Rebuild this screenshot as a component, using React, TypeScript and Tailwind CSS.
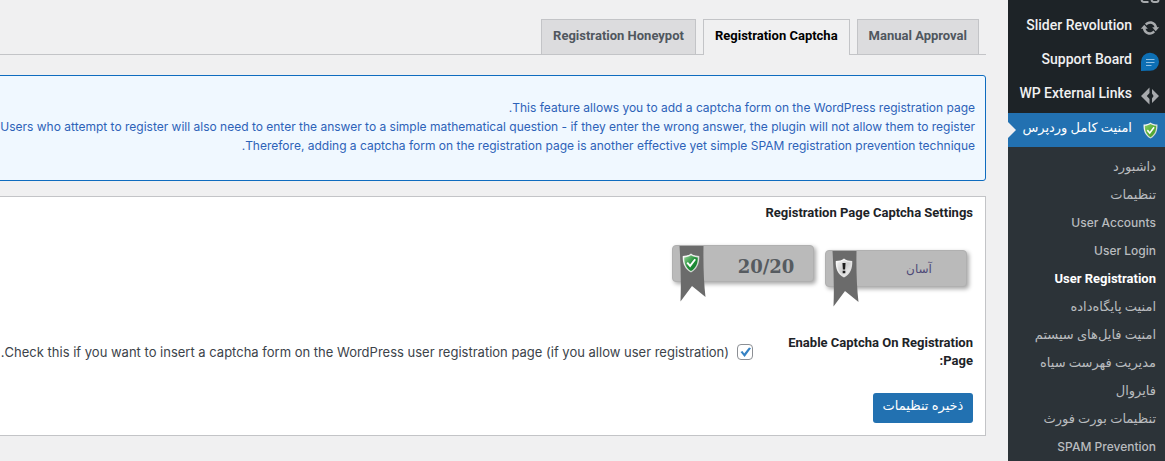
import type { ReactNode } from "react";

const latin = "font-['Roboto','DejaVu_Sans',sans-serif]";

function Shield({ kind, className }: { kind: "green" | "lime" | "gray"; className: string }) {
  const gray = kind === "gray";
  const fill = { green: ["#9bd69b", "#23913a", "#0f7a2a"], lime: ["#8fce6a", "#5bb03a", "#4a9c2c"], gray: ["#f4f4f4", "#d0d0d0", "#f8f8f8"] }[kind];
  return (
    <svg viewBox="0 0 16 18" className={className} aria-hidden="true">
      <defs>
        <linearGradient id={"rim-" + kind} x1="0" y1="0" x2="1" y2="1">
          <stop offset="0" stopColor="#ffffff" />
          <stop offset="1" stopColor={gray ? "#d5d5d5" : "#c2cbc2"} />
        </linearGradient>
        <linearGradient id={"fill-" + kind} x1="0" y1="0" x2="1" y2="1">
          <stop offset="0" stopColor={fill[0]} />
          <stop offset="0.5" stopColor={fill[1]} />
          <stop offset="1" stopColor={fill[2]} />
        </linearGradient>
      </defs>
      <path d="M8 0.4 C10 2 12.6 2.6 15.4 2.6 C15.8 9.5 13.6 14.6 8 17.6 C2.4 14.6 0.2 9.5 0.6 2.6 C3.4 2.6 6 2 8 0.4Z" fill={"url(#rim-" + kind + ")"} />
      <path d="M8 2.1 C10 3.4 12 3.9 14.1 4 C14.2 9.4 12.4 13.6 8 16.2 C3.6 13.6 1.8 9.4 1.9 4 C4 3.9 6 3.4 8 2.1Z" fill={"url(#fill-" + kind + ")"} />
      {gray ? (
        <path d="M6.6 4.4 H9.4 L9 10.4 H7Z M6.8 11.4 H9.2 V13.8 H6.8Z" fill="#1c1c1c" />
      ) : (
        <path d="M4.6 8.6 L7.2 11.6 L11.8 5.6" fill="none" stroke="#fff" strokeWidth="1.7" />
      )}
    </svg>
  );
}

function Badge({ kind, children }: { kind: "green" | "gray"; children: ReactNode }) {
  return (
    <div className="relative flex h-[37px] w-[142px] items-center justify-center rounded-[4px] border border-[#b0b0b0] bg-[#bababa] pl-[46px] shadow-[2px_2px_4px_rgba(0,0,0,0.35)]">
      <svg viewBox="0 0 27 56" className="absolute top-0 left-[6px] h-[56px] w-[27px]" aria-hidden="true">
        <path d="M0.5 0 H24.5 Q24 30 26.5 51 L13 40 L1.5 55.5 Q2.5 30 0.5 0Z" fill="#6b6b6b" />
      </svg>
      <Shield kind={kind} className="absolute top-[7px] left-[9px] h-[20px] w-[18px]" />
      {children}
    </div>
  );
}

const menu: { label: string; icon: ReactNode }[] = [
  {
    label: "Slider Revolution",
    icon: (
      <svg viewBox="0 0 20 20" className="size-5" aria-hidden="true">
        <path
          d="M10.2 3.28c3.53 0 6.43 2.61 6.92 6h2.08l-3.5 4-3.5-4h2.32c-.45-1.97-2.21-3.45-4.32-3.45-1.45 0-2.73.71-3.54 1.78L4.95 5.66C6.23 4.2 8.11 3.28 10.2 3.28zm-.4 13.44c-3.52 0-6.43-2.61-6.92-6H.8l3.5-4c1.17 1.33 2.33 2.67 3.5 4H5.48c.45 1.97 2.21 3.45 4.32 3.45 1.45 0 2.73-.71 3.54-1.78l1.71 1.95c-1.28 1.46-3.15 2.38-5.25 2.38z"
          fill="#a7aaad"
        />
      </svg>
    ),
  },
  {
    label: "Support Board",
    icon: (
      <svg viewBox="0 0 20 20" className="size-5" aria-hidden="true">
        <path d="M1 19 V10 A9 9 0 1 1 10 18.8 Q5 18.6 1 19Z" fill="#0d6fb4" />
        <path d="M6 7.5 H14.5 M6 10.5 H14.5 M6 13.5 H11.5" stroke="#8fc0e4" strokeWidth="1.2" />
      </svg>
    ),
  },
  {
    label: "WP External Links",
    icon: (
      <svg viewBox="0 0 20 20" className="size-5" aria-hidden="true">
        <path d="M9.5 1.5 V7 L6.8 10 L9.5 13 V18.5 L1 10Z M12 3 L19 10 L12 17 V12.5 L13.6 10 L12 7.5Z" fill="#a7aaad" />
      </svg>
    ),
  },
];

const submenu: { label: string; className: string }[] = [
  { label: "داشبورد", className: "text-[13px] text-[#b9bcbf]" },
  { label: "تنظیمات", className: "text-[13px] text-[#b9bcbf]" },
  { label: "User Accounts", className: "font-[Inter,sans-serif] text-xs font-medium text-[#b9bcbf]" },
  { label: "User Login", className: "font-[Inter,sans-serif] text-xs font-medium text-[#b9bcbf]" },
  { label: "User Registration", className: "text-[13px] font-bold text-white" },
  { label: "امنیت پایگاه‌داده", className: "text-[13px] text-[#b9bcbf]" },
  { label: "امنیت فایل‌های سیستم", className: "text-[13px] text-[#b9bcbf]" },
  { label: "مدیریت فهرست سیاه", className: "text-[13px] text-[#b9bcbf]" },
  { label: "فایروال", className: "text-[13px] text-[#b9bcbf]" },
  { label: "تنظیمات بورت فورث", className: "text-[13px] text-[#b9bcbf]" },
  { label: "SPAM Prevention", className: "font-[Inter,sans-serif] text-xs font-medium text-[#b9bcbf]" },
];

function Sidebar() {
  return (
    <aside className="w-[157px] shrink-0 bg-[#2c3338] whitespace-nowrap">
      <nav>
        <div className="bg-[#1d2327] pb-px">
          <div className="flex h-[10px] items-start overflow-hidden pr-[5px]">
            <svg viewBox="0 0 20 4" className="h-1 w-5" aria-hidden="true">
              <path d="M1.5 0 Q2 2 4 2 H8.5 M11.5 0 Q12 2 14 2 H16.5 Q18.5 2 18.5 0" fill="none" stroke="#a7aaad" strokeWidth="2" />
            </svg>
          </div>
          {menu.map((m) => (
            <a key={m.label} href="#" className="flex h-[34px] items-center gap-2 pr-[5px] text-sm font-medium text-[#f0f0f1]">
              <span className="pt-0.5">{m.icon}</span>
              <span className="pb-1">{m.label}</span>
            </a>
          ))}
        </div>
        <a href="#" className="relative flex h-[34px] items-center gap-2 bg-[#2271b1] pr-[5px] text-[13px] font-medium text-white">
          <span className="flex w-5 justify-center">
            <Shield kind="lime" className="h-[17px] w-[15px]" />
          </span>
          <span className="pb-1">امنیت کامل وردپرس</span>
          <span className="absolute top-[9px] left-0 border-y-8 border-l-8 border-y-transparent border-l-[#f0f0f1]" />
        </a>
        <ul className="pt-[6px]">
          {submenu.map((s) => (
            <li key={s.label}>
              <a href="#" className={s.className + " block h-7 pr-[9px] leading-7"}>
                {s.label}
              </a>
            </li>
          ))}
        </ul>
      </nav>
    </aside>
  );
}

function Tab({ label, active }: { label: string; active?: boolean }) {
  return (
    <a
      href="#"
      className={
        active
          ? "-mb-px h-9 border border-b-0 border-[#c3c4c7] bg-[#f0f0f1] px-[11px] text-[13px] leading-[31px] font-bold text-black"
          : "h-[35px] border border-b-0 border-[#c3c4c7] bg-[#dcdcde] px-[11px] text-[13px] leading-[31px] font-bold text-[#50575e]"
      }
    >
      {label}
    </a>
  );
}

export default function App() {
  return (
    <div dir="rtl" className={latin + " flex min-h-screen overflow-hidden bg-[#f0f0f1]"}>
      <Sidebar />
      <main className="min-w-0 flex-1 overflow-hidden pt-[19px] pr-[22px]">
        <div className="-ml-5">
          <nav className="flex gap-[7px] border-b border-[#c3c4c7] pr-[7px] whitespace-nowrap">
            <Tab label="Manual Approval" />
            <Tab label="Registration Captcha" active />
            <Tab label="Registration Honeypot" />
          </nav>

          <section className="mt-5 rounded-[3px] border border-[#0f6cbf] bg-[#f0f8ff] px-[10px] pt-[22px] pb-[25px] font-[Inter,sans-serif] text-xs leading-[19px] whitespace-nowrap text-[#2d62b8]">
            <p>This feature allows you to add a captcha form on the WordPress registration page.</p>
            <p>Users who attempt to register will also need to enter the answer to a simple mathematical question - if they enter the wrong answer, the plugin will not allow them to register</p>
            <p>Therefore, adding a captcha form on the registration page is another effective yet simple SPAM registration prevention technique.</p>
          </section>

          <form className="mt-[15px] border border-[#c3c4c7] bg-white px-3 pt-[6px] pb-3" onSubmit={(e) => e.preventDefault()}>
            <h3 className="text-[13px] leading-5 font-bold text-[#1d2327]">Registration Page Captcha Settings</h3>
            <div className="flex items-start gap-[11px] pt-[22px] pr-[6px]">
              <div className="pt-[5px]">
                <Badge kind="gray">
                  <span className="font-['DejaVu_Sans',sans-serif] text-xs text-[#4f4a78]">آسان</span>
                </Badge>
              </div>
              <Badge kind="green">
                <span className="pt-1.5 font-['DejaVu_Serif',serif] text-lg font-bold text-[#565b60]" dir="ltr">20/20</span>
              </Badge>
            </div>
            <div className="mt-[47px] flex items-start">
              <label htmlFor="captcha" className="w-[220px] shrink-0 text-[13px] leading-[18px] font-bold text-[#1d2327]">
                <span className="block w-[200px]">Enable Captcha On Registration Page:</span>
              </label>
              <div className="flex items-center gap-2 pt-2 whitespace-nowrap">
                <span className="relative size-4">
                  <input id="captcha" type="checkbox" defaultChecked className="peer block size-4 appearance-none rounded-[4px] border border-[#8c8f94] bg-white" />
                  <svg viewBox="0 0 16 16" className="pointer-events-none absolute inset-0 hidden size-4 peer-checked:block" aria-hidden="true">
                    <path d="M3.5 8 L5.5 7 L7.2 9.6 L12 3.4 L14 4.2 L7.6 13Z" fill="#3582c4" />
                  </svg>
                </span>
                <span className="font-[Inter,sans-serif] text-[13px] leading-5 text-[#3c434a]">Check this if you want to insert a captcha form on the WordPress user registration page (if you allow user registration).</span>
              </div>
            </div>
            <button type="submit" className="mt-[23px] block h-[30px] w-[100px] rounded-[3px] bg-[#2271b1] pb-1 text-[13px] text-white">
              ذخیره تنظیمات
            </button>
          </form>
        </div>
      </main>
    </div>
  );
}
